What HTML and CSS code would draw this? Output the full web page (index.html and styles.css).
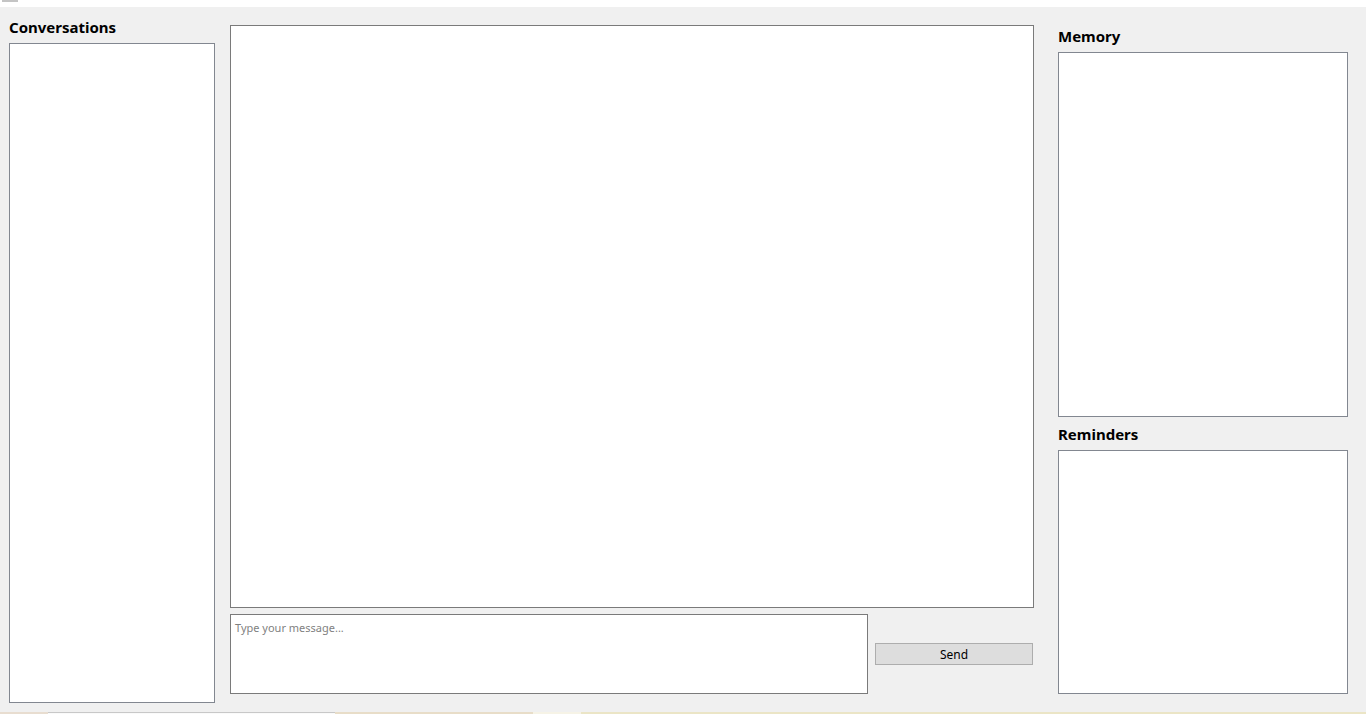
FILE: index.html
```html
<!DOCTYPE html>
<html>
<head>
<title>Assistant</title>
<link rel="stylesheet" href="styles.css">
</head>
<body>
<div class="titlebar"><div class="app-icon"></div></div>
<div id="window">
  <div class="col-left">
    <div class="heading">Conversations</div>
    <div class="listbox conversations"></div>
  </div>

  <div class="col-middle">
    <div class="chat-log"></div>
    <div class="composer">
      <textarea class="message-input" placeholder="Type your message..."></textarea>
      <button class="send-btn">Send</button>
    </div>
  </div>

  <div class="col-right">
    <div class="heading">Memory</div>
    <div class="listbox memory"></div>
    <div class="heading">Reminders</div>
    <div class="listbox reminders"></div>
  </div>
</div>
<div class="taskbar-edge">
  <div class="seg seg-a"></div>
  <div class="seg seg-b"></div>
  <div class="seg seg-c"></div>
  <div class="seg seg-d"></div>
  <div class="seg seg-e"></div>
</div>
</body>
</html>
```

FILE: styles.css
```css
html, body {
  margin: 0;
  padding: 0;
  height: 100%;
  overflow: hidden;
}

body {
  font-family: "Noto Sans", "Open Sans", Arial, sans-serif;
  background-color: #f0f0f0;
  color: #000;
}

.titlebar {
  height: 7px;
  background-color: #fff;
  padding-left: 2px;
}

.app-icon {
  width: 16px;
  height: 2px;
  background-color: #c4c4c4;
}

#window {
  height: 705px;
  display: flex;
  align-items: flex-start;
  padding-left: 9px;
}

.heading {
  font-size: 15px;
  font-weight: bold;
  line-height: 20px;
  height: 20px;
}

.listbox {
  background-color: #fff;
  border: 1px solid #828790;
  box-sizing: border-box;
}

/* left column */
.col-left {
  width: 206px;
  padding-top: 10px;
}

.col-left .heading {
  margin-bottom: 6px;
}

.conversations {
  height: 660px;
}

/* middle column */
.col-middle {
  width: 804px;
  margin-left: 15px;
  padding-top: 18px;
}

.chat-log {
  height: 583px;
  background-color: #fff;
  border: 1px solid #7a7a7a;
  box-sizing: border-box;
}

.composer {
  display: flex;
  align-items: center;
  gap: 7px;
  margin-top: 6px;
}

.message-input {
  width: 638px;
  height: 80px;
  box-sizing: border-box;
  border: 1px solid #7a7a7a;
  background-color: #fff;
  padding: 5px 4px;
  margin: 0;
  resize: none;
  outline: none;
  font-family: "Noto Sans", "Open Sans", Arial, sans-serif;
  font-size: 11px;
}

.message-input::placeholder {
  color: #7f7f7f;
}

.send-btn {
  width: 158px;
  height: 22px;
  box-sizing: border-box;
  background-color: #dddddd;
  border: 1px solid #adadad;
  font-family: "Noto Sans", "Open Sans", Arial, sans-serif;
  font-size: 12px;
  color: #000;
  padding: 0;
  -webkit-appearance: none;
}

/* right column */
.col-right {
  width: 290px;
  margin-left: 24px;
  padding-top: 19px;
  display: flex;
  flex-direction: column;
}

.col-right .heading {
  margin-bottom: 6px;
}

.memory {
  height: 365px;
  margin-bottom: 7px;
}

.reminders {
  height: 244px;
}

.taskbar-edge {
  height: 2px;
  display: flex;
}

.seg { height: 2px; }
.seg-a { width: 48px; background-color: #e8ddd0; }
.seg-b { width: 287px; background-color: #fafafa; border-top: 1px solid #c8c8c8; box-sizing: border-box; }
.seg-c { width: 198px; background-color: #e8ddc8; }
.seg-d { width: 48px; background-color: #f6f3e6; }
.seg-e { flex: 1; background-color: #ebe5c6; }
```
